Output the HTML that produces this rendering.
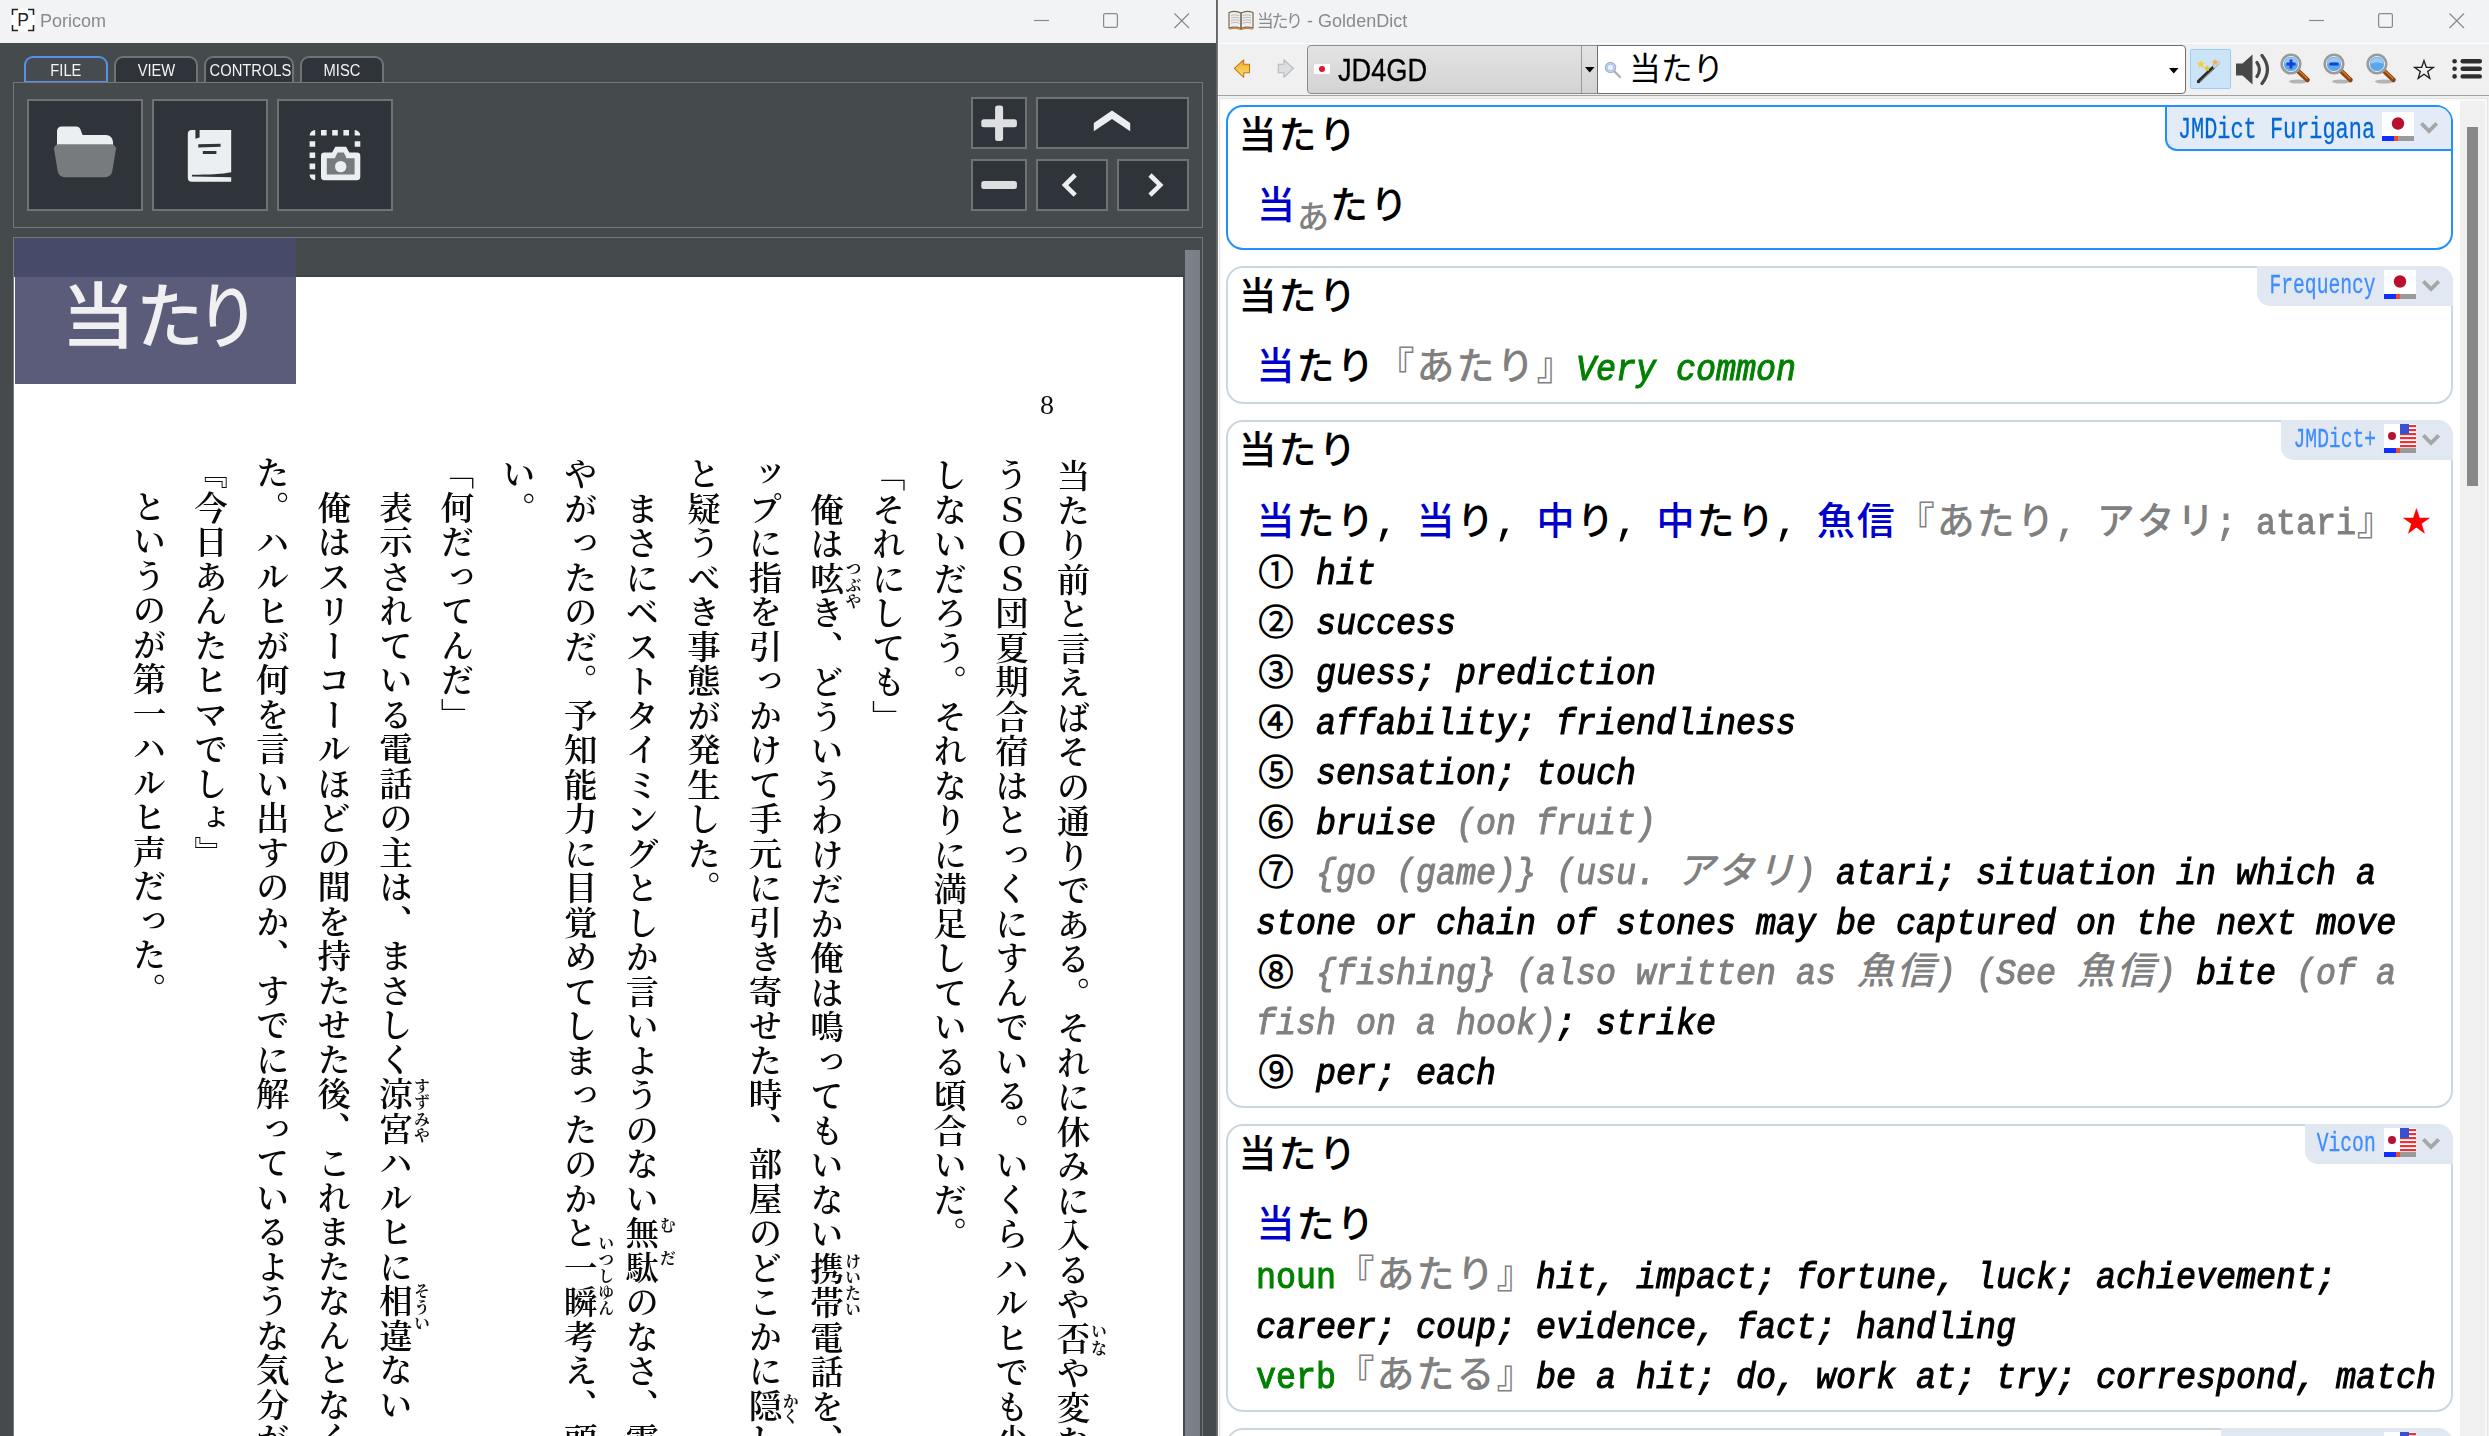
<!DOCTYPE html>
<html lang="ja">
<head>
<meta charset="utf-8">
<title>当たり - GoldenDict / Poricom</title>
<style>
*{margin:0;padding:0;box-sizing:border-box}
html,body{width:2489px;height:1436px;background:#fff}
body{font-family:"Liberation Sans","Noto Sans CJK JP",sans-serif}
#root{position:relative;width:2489px;height:1436px;overflow:hidden;background:#fff}
.a{position:absolute}
/* ---------- left window : Poricom ---------- */
#L{left:0;top:0;width:1216px;height:1436px;background:#454b4d;overflow:hidden}
.tb{left:0;top:0;height:43px;background:#f2f3f5}
.tt{top:9px;height:24px;line-height:24px;font-size:18px;color:#8a8a8a;white-space:nowrap;filter:grayscale(1)}
.tab{top:56px;height:27px;border:2px solid #6f7375;border-bottom:0;border-radius:9px 9px 0 0;background:#2f343a;color:#f4f4f4;font-size:16px;line-height:25px;text-align:center;white-space:nowrap}
.tab span{display:inline-block;transform:scaleX(.92)}
.tab.on{background:#454b4e;border:2px solid #5a8fe6;height:27px}
.pn{border:1px solid #75797b}
.bt{background:#2f343a;border:2px solid #6f7375}
.bt svg{position:absolute;left:0;top:0}
#pg{left:14px;top:277px;width:1169px;height:1159px;background:#fff;overflow:hidden}
#tx{left:0;top:0;width:1169px;height:1159px;filter:grayscale(1)}
.c{position:absolute;top:181.5px;width:40px;writing-mode:vertical-rl;font-family:"Liberation Serif","Noto Serif CJK SC",serif;font-size:33.5px;line-height:40px;letter-spacing:1px;color:#0a0a0a;white-space:nowrap;font-weight:600}
.r{position:absolute;width:20px;writing-mode:vertical-rl;font-family:"Liberation Serif","Noto Serif CJK SC",serif;font-size:16px;line-height:20px;color:#111;white-space:nowrap;font-weight:700}
.pop{color:#f0f0f2;font-size:72px;line-height:100px;font-weight:500;font-family:"Liberation Sans","Noto Sans CJK JP",sans-serif;white-space:nowrap}
.pop span{position:absolute;top:28.5px;display:block;transform-origin:0 0}
/* ---------- right window : GoldenDict ---------- */
#R{left:1218px;top:0;width:1271px;height:1436px;background:#fff;overflow:hidden}
.card{border:2px solid #cbd7df;border-radius:17px;background:#fff}
.card.on{border-color:#1e90ff}
.dn{height:40px;background:#e1e8f2;border-radius:0 15px 0 13px;font-family:"Liberation Mono",monospace;font-size:27.9px;color:#3f8cff;white-space:nowrap}
.dn.on{border:2px solid #1e90ff;border-top:0;border-right:0;border-radius:0 14px 0 12px;background:#e3ecf6;color:#0468d4;font-size:30px}
.dn i{position:absolute;display:block;font-style:normal;transform:scaleX(.705);transform-origin:100% 50%;-webkit-text-stroke:.3px currentColor}
.dn.on i{transform:scaleX(.73)}
.hw{font-family:"Liberation Sans","Noto Sans CJK JP",sans-serif;font-size:38px;letter-spacing:2px;font-weight:500;line-height:50px;height:50px;color:#000;white-space:nowrap}
.ln{font-family:"Liberation Sans","Noto Sans CJK JP",sans-serif;font-size:38px;font-weight:500;line-height:50px;height:50px;color:#000;white-space:pre}
.ln span{display:inline-block;vertical-align:baseline}
.ln .m{font-family:"Liberation Mono",monospace;font-size:36.75px;font-weight:400;transform:scaleX(.907);transform-origin:0 50%;-webkit-text-stroke:1.05px currentColor}
.ln .i{font-style:italic}
.ln .j{font-family:"Liberation Sans","Noto Sans CJK JP",sans-serif;letter-spacing:2px;position:relative;top:-.5px;left:1px}
.ln .cd{font-family:"Liberation Sans","Noto Sans CJK JP",sans-serif;font-size:35px;font-weight:300;width:40px;text-align:center;position:relative;left:.5px;top:.5px;-webkit-text-stroke:1.3px currentColor}
.k{color:#0000cd}
.g{color:#808080}
.n{color:#008000}
</style>
</head>
<body>
<div id="root">
<div id="L" class="a">
<div class="a tb" style="width:1216px"></div>
<svg class="a" style="left:11px;top:8px" width="24" height="24" viewBox="0 0 24 24"><rect x="0.5" y="0.5" width="23" height="23" fill="#fff"/><path d="M1.5 7V1.5H7M17 1.5h5.5V7M22.5 17v5.5H17M7 22.5H1.5V17" fill="none" stroke="#222" stroke-width="1.6"/><text x="12" y="18.2" font-family="Liberation Sans, sans-serif" font-size="17.5" text-anchor="middle" fill="#222">P</text></svg>
<div class="a tt" style="left:40px">Poricom</div>
<svg class="a" style="left:1034px;top:10px" width="160" height="22" viewBox="0 0 160 22"><path d="M0 10.5h15" stroke="#8a8a8a" stroke-width="1.2" fill="none"/><rect x="69.6" y="3.6" width="13.8" height="13.8" rx="1.6" fill="none" stroke="#8a8a8a" stroke-width="1.2"/><path d="M140.5 3.5l14.5 14.5M155 3.5l-14.5 14.5" stroke="#8a8a8a" stroke-width="1.2" fill="none"/></svg>
<div class="a tab on" style="left:24px;width:84px"><span>FILE</span></div>
<div class="a tab" style="left:114px;width:84px"><span>VIEW</span></div>
<div class="a tab" style="left:204px;width:90px"><span>CONTROLS</span></div>
<div class="a tab" style="left:300px;width:84px"><span>MISC</span></div>
<div class="a pn" style="left:13px;top:82px;width:1190px;height:146px"></div>
<div class="a bt" style="left:27px;top:99px;width:116px;height:112px"><svg width="112" height="108" viewBox="29 101 112 108"><path d="M57 131a4.5 4.5 0 0 1 4.5-4.5h14.5a5 5 0 0 1 4.6 3.2l1.6 4.6a1 1 0 0 0 1 .7h22.8a7 7 0 0 1 7 7v6H57z" fill="#eceff1"/><path d="M58.5 144.3h53a4.5 4.5 0 0 1 4.4 5.3l-3.6 21.6a7.2 7.2 0 0 1-7.1 6H64.8a7.2 7.2 0 0 1-7.1-6l-3.6-21.6a4.5 4.5 0 0 1 4.4-5.3z" fill="#787b7d"/></svg></div>
<div class="a bt" style="left:152px;top:99px;width:116px;height:112px"><svg width="112" height="108" viewBox="154 101 112 108"><path d="M187.800 134a4 4 0 0 1 4-4h3.600v8.800l4.200-1.200v-7.600h31.600v42.200c-8 1.800-24 2.400-39.200 2.600v1.800l39.200.600v4.600h-39.400a4 4 0 0 1-4-4z" fill="#eceff1"/><path d="M198.300 144.300l22.300-.6v3l-22.300.8zM202.800 151h13.600v3.100h-13.600z" fill="#2f343a"/></svg></div>
<div class="a bt" style="left:277px;top:99px;width:116px;height:112px"><svg width="112" height="108" viewBox="279 101 112 108"><path d="M309.6 135.6a5.6 5.6 0 0 1 5.6-5.6v5.6zM321 130h5.6v5.6H321zM332.2 130h5.6v5.6h-5.6zM343.4 130h5.6v5.6h-5.6zM354.7 130a5.6 5.6 0 0 1 5.6 5.6h-5.6zM354.7 141.2h5.6v5.6h-5.6zM309.6 141.2h5.6v5.6h-5.6zM309.6 152.4h5.6v5.6h-5.6zM309.6 163.6h5.6v5.6h-5.6zM309.6 174.6h5.6v5.6a5.6 5.6 0 0 1-5.6-5.6z" fill="#eceff1"/><path d="M335.3 146.8h10.8l3.2 5.6h7.6a3.4 3.4 0 0 1 3.4 3.4v21a3.4 3.4 0 0 1-3.4 3.4h-32.500a3.4 3.4 0 0 1-3.400-3.4v-21a3.4 3.4 0 0 1 3.400-3.4h7.700z" fill="#eceff1"/><path d="M326.800 158.2h8l2.800-5.600h6.200l2.800 5.600h8v16.200h-27.800z" fill="#787b7d"/><circle cx="340.7" cy="166.600" r="5.700" fill="#eceff1"/></svg></div>
<div class="a bt" style="left:971px;top:97px;width:56px;height:52px"><svg width="52" height="48" viewBox="973 99 52 48"><rect x="981.300" y="119.200" width="35.600" height="8" rx="2.500" fill="#dedfe1"/><rect x="995.100" y="105.400" width="8" height="35.600" rx="2.500" fill="#dedfe1"/></svg></div>
<div class="a bt" style="left:971px;top:159px;width:56px;height:52px"><svg width="52" height="48" viewBox="973 161 52 48"><rect x="981.300" y="181" width="35.600" height="8" rx="2.500" fill="#dedfe1"/></svg></div>
<div class="a bt" style="left:1036px;top:97px;width:153px;height:52px"><svg width="149" height="48" viewBox="1038 99 149 48"><path d="M1093.800 131.200v-8.200l18.200-12.400 18.200 12.400v8.200l-18.200-12.200z" fill="#eceff1"/></svg></div>
<div class="a bt" style="left:1036px;top:159px;width:72px;height:52px"><svg width="68" height="48" viewBox="1038 161 68 48"><path d="M1075.200 175l-10.200 10.100 10.200 10.100" stroke="#eceff1" stroke-width="4.600" fill="none"/></svg></div>
<div class="a bt" style="left:1117px;top:159px;width:72px;height:52px"><svg width="68" height="48" viewBox="1119 161 68 48"><path d="M1150 175l10.200 10.100-10.200 10.100" stroke="#eceff1" stroke-width="4.600" fill="none"/></svg></div>
<div class="a pn" style="left:13px;top:237px;width:1190px;height:1210px"></div>
<div class="a" style="left:14px;top:274px;width:1170px;height:3px;background:linear-gradient(#454b4d,#3a3f41)"></div>
<div id="pg" class="a" lang="ja"><div id="tx" class="a">
<div class="a" style="left:1021px;top:112.500px;width:24px;height:30px;font-family:'Liberation Serif',serif;font-size:28px;line-height:30px;text-align:center;color:#111">8</div>
<div class="c" style="left:1036.0px;top:181.5px">当たり前と言えばその通りである。それに休みに入るや否や変な</div>
<div class="c" style="left:974.4px;top:181.3px">うＳＯＳ団夏期合宿はとっくにすんでいる。いくらハルヒでも少</div>
<div class="c" style="left:912.8px;top:181.1px">しないだろう。それなりに満足している頃合いだ。</div>
<div class="c" style="left:851.2px;top:180.9px">「それにしても」</div>
<div class="c" style="left:789.6px;top:180.7px">　俺は呟き、どういうわけだか俺は鳴ってもいない携帯電話を、</div>
<div class="c" style="left:728.0px;top:180.4px">ップに指を引っかけて手元に引き寄せた時、部屋のどこかに隠し</div>
<div class="c" style="left:666.4px;top:180.2px">と疑うべき事態が発生した。</div>
<div class="c" style="left:604.8px;top:180.0px">　まさにベストタイミングとしか言いようのない無駄のなさ、電</div>
<div class="c" style="left:543.2px;top:179.8px">やがったのだ。予知能力に目覚めてしまったのかと一瞬考え、頭</div>
<div class="c" style="left:481.6px;top:179.6px">い。</div>
<div class="c" style="left:420.0px;top:179.4px">「何だってんだ」</div>
<div class="c" style="left:358.4px;top:179.2px">　表示されている電話の主は、まさしく涼宮ハルヒに相違ない</div>
<div class="c" style="left:296.8px;top:179.0px">　俺はスリーコールほどの間を持たせた後、これまたなんとなく</div>
<div class="c" style="left:235.2px;top:178.8px">た。ハルヒが何を言い出すのか、すでに解っているような気分が</div>
<div class="c" style="left:173.6px;top:178.6px">『今日あんたヒマでしょ』</div>
<div class="c" style="left:112.0px;top:178.3px">　というのが第一ハルヒ声だった。</div>
<div class="r" style="left:828.0px;top:283.0px;letter-spacing:0.5px">つぶや</div>
<div class="r" style="left:827.4px;top:975.5px;letter-spacing:0.0px">けいたい</div>
<div class="r" style="left:765.3px;top:1116.0px;letter-spacing:-1.5px">かく</div>
<div class="r" style="left:642.3px;top:940.0px;letter-spacing:0.0px">む</div>
<div class="r" style="left:642.3px;top:972.5px;letter-spacing:0.0px">だ</div>
<div class="r" style="left:580.8px;top:958.0px;letter-spacing:0.3px">いつしゆん</div>
<div class="r" style="left:396.6px;top:801.0px;letter-spacing:0.3px">すずみや</div>
<div class="r" style="left:396.6px;top:1006.0px;letter-spacing:0.2px">そうい</div>
<div class="r" style="left:1073.5px;top:1046.0px;letter-spacing:1.0px">いな</div>
</div></div>
<div class="a" style="left:1185px;top:250px;width:15px;height:1190px;background:linear-gradient(90deg,#7d848b,#797d85)"></div>
<div class="a" style="left:14px;top:238px;width:282px;height:39px;background:#474b69"></div>
<div class="a" style="left:15px;top:277px;width:281px;height:107px;background:#5b5c79"></div>
<div class="a pop" lang="ja" style="left:15px;top:238px;width:281px;height:146px"><span style="left:46.400px;transform:scaleX(1.035)">当</span><span style="left:121.200px;transform:scaleX(.938)">た</span><span style="left:182.200px;transform:scaleX(.858)">り</span></div>
</div>
<div class="a" style="left:1216px;top:0;width:2px;height:1436px;background:linear-gradient(90deg,#5a5a5a,#808080)"></div>
<div id="R" class="a" lang="ja">
<div class="a tb" style="width:1271px"></div>
<svg class="a" style="left:10px;top:9px" width="26" height="22" viewBox="0 0 26 22"><path d="M1 3.500c4-1.500 8-1.500 12 .5 4-2 8-2 12-.5v15.500c-4-1.200-8-1.200-12 .600-4-1.800-8-1.800-12-.600z" fill="#efefef" stroke="#7d6a4c" stroke-width="1.200"/><path d="M1 19.500c4-1.200 8-1.200 12 .600 4-1.800 8-1.800 12-.600v1.200c-4-1-8-1-12 .5-4-1.500-8-1.500-12-.5z" fill="#c98a3c"/><path d="M13 4v15.500" stroke="#6f6552" stroke-width="1.600"/><path d="M3 6.500c3-1 6-.8 8.500.3M3 9c3-1 6-.8 8.500.3M3 11.500c3-1 6-.8 8.500.3M3 14c3-1 6-.8 8.500.3M14.500 6.800c2.500-1.100 5.500-1.300 8.500-.3M14.500 9.300c2.500-1.100 5.500-1.300 8.500-.3M14.500 11.800c2.500-1.100 5.500-1.300 8.500-.3M14.500 14.300c2.500-1.100 5.500-1.300 8.500-.3" stroke="#b0b0b0" stroke-width=".9" fill="none"/></svg>
<div class="a tt" style="left:38.8px"><span style="font-size:17px;letter-spacing:-2.400px">当たり</span><span style="margin-left:1.500px"> - GoldenDict</span></div>
<svg class="a" style="left:1091px;top:10px" width="160" height="22" viewBox="0 0 160 22"><path d="M0 10.5h15" stroke="#8a8a8a" stroke-width="1.2" fill="none"/><rect x="69.6" y="3.6" width="13.8" height="13.8" rx="1.6" fill="none" stroke="#8a8a8a" stroke-width="1.2"/><path d="M140.5 3.5l14.5 14.5M155 3.5l-14.5 14.5" stroke="#8a8a8a" stroke-width="1.2" fill="none"/></svg>
<div class="a" style="left:0;top:96px;width:1px;height:1345px;background:#fafafa;z-index:1"></div>
<div class="a" style="left:0;top:44px;width:1px;height:51px;background:#fafafa;z-index:1"></div>
<div class="a" style="left:0;top:43px;width:1271px;height:53px;background:#f0f0f0;border-top:1px solid #fff;border-bottom:1px solid #a3a3a3"></div>
<div class="a" style="left:0;top:96px;width:1271px;height:1340px;background:#f0f0f0"></div>
<svg class="a" style="left:14.8px;top:59.300px" width="18" height="19" viewBox="-1 -.5 18 19"><defs><linearGradient id="ga" x1="0" y1="0" x2="0" y2="1"><stop offset="0" stop-color="#f2a63a"/><stop offset=".45" stop-color="#f6c244"/><stop offset="1" stop-color="#f8e478"/></linearGradient></defs><path d="M.3 8.900L9.700.3v4.400h5.800v8.500H9.700v4.600z" fill="url(#ga)" stroke="#c27c1c" stroke-width="1.100" stroke-linejoin="round"/></svg>
<svg class="a" style="left:58.8px;top:59.300px" width="18" height="19" viewBox="-1 -.5 18 19"><path d="M15.400 8.900L6 .3v4.400H.3v8.500H6v4.600z" fill="#dcdee0" stroke="#b4b8bc" stroke-width="1.100" stroke-linejoin="round"/></svg>
<div class="a" style="left:89px;top:45px;width:291px;height:49px;border:1px solid #8c8c8c;border-radius:4px 0 0 4px;background:linear-gradient(#e3e3e3,#dcdcdc 45%,#d3d3d3)"></div>
<div class="a" style="left:363px;top:46px;width:1px;height:47px;background:#9a9a9a"></div>
<svg class="a" style="left:367px;top:67px" width="10" height="6" viewBox="0 0 10 6"><path d="M0 0h9.500L4.750 5.500z" fill="#000"/></svg>
<svg class="a" style="left:96px;top:64px" width="16" height="10" viewBox="0 0 16 10"><rect width="16" height="10" fill="#fff"/><circle cx="8" cy="5" r="3" fill="#e8112d"/></svg>
<div class="a" style="left:120px;top:50px;height:40px;line-height:40px;font-size:32px;color:#000;white-space:nowrap;transform:scaleX(.85);transform-origin:0 0;-webkit-text-stroke:.35px #000">JD4GD</div>
<div class="a" style="left:379px;top:45px;width:589px;height:49px;border:1px solid #6e6e6e;border-radius:0 4px 4px 0;background:#fff"></div>
<svg class="a" style="left:386px;top:61px" width="18" height="18" viewBox="0 0 18 18"><circle cx="6.500" cy="6.500" r="5" fill="#dbe8f8" stroke="#a9b6cf" stroke-width="1.600"/><circle cx="6.500" cy="6.500" r="3.300" fill="#e9f1fb" stroke="#8fb4ee" stroke-width=".8"/><path d="M10.500 10.500l5.500 5.500" stroke="#b0b0b0" stroke-width="2.400" stroke-linecap="round"/></svg>
<div class="a" style="left:411.3px;top:44.700px;height:49px;line-height:49px;font-size:31.600px;color:#000;white-space:nowrap;font-family:'Liberation Sans','Noto Sans CJK JP',sans-serif">当たり</div>
<svg class="a" style="left:951px;top:68px" width="10" height="6" viewBox="0 0 10 6"><path d="M0 0h9.500L4.750 5.500z" fill="#000"/></svg>
<div class="a" style="left:972px;top:49px;width:41px;height:40px;background:#cce4f7;border:1px solid #9acdf8;border-radius:2px"></div>
<svg class="a" style="left:977px;top:54px" width="32" height="32" viewBox="0 0 32 32"><path d="M3.500 27.500L23 9" stroke="#2b2b2b" stroke-width="3.400" stroke-linecap="round"/><path d="M5 27.500L21 12.500" stroke="#8a8a8a" stroke-width="1" stroke-linecap="round"/><path d="M19.500 12.300l4.300-4.100" stroke="#c9d2e2" stroke-width="3.400" stroke-linecap="round"/><path d="M6 6l1.200 2.600 2.800.4-2 2 .5 2.800L6 12.500 3.500 13.800l.5-2.800-2-2 2.800-.4z" fill="#f4d03f"/><path d="M12 11l1 2 2.200.300-1.600 1.600.4 2.200-2-1-2 1 .4-2.200-1.600-1.600 2.200-.300z" fill="#f1c40f"/><path d="M20 5l1 2 2.200.300-1.600 1.600.4 2.200-2-1-2 1 .4-2.200-1.600-1.600 2.200-.300z" fill="#f5b041"/></svg>
<svg class="a" style="left:1018px;top:53px" width="36" height="33" viewBox="0 0 36 33"><path d="M0 10.500h6.500L16.500 1.500v30L6.500 22.500H0z" fill="#484848"/><path d="M21 9.500c3.200 4.600 3.200 9.400 0 14M26 2.500c7 9 7 19 0 28" stroke="#484848" stroke-width="3.200" fill="none" stroke-linecap="round"/></svg>
<svg class="a" style="left:1062px;top:53px" width="32" height="32" viewBox="0 0 32 32"><ellipse cx="18" cy="28.500" rx="9" ry="2" fill="#000" opacity=".25"/><path d="M17 17l10.500 10" stroke="#8b4513" stroke-width="4.600" stroke-linecap="round"/><path d="M17.500 16.500l9.500 9" stroke="#d2762c" stroke-width="1.600" stroke-linecap="round"/><circle cx="11" cy="11" r="9.300" fill="#5aa7ea" stroke="#9a9a9a" stroke-width="2.600"/><circle cx="11" cy="11" r="7.600" fill="none" stroke="#e8e8e8" stroke-width="1"/><path d="M4.500 11a6.500 6.500 0 0 1 13 0c-4-2-9-2-13 0z" fill="#a9d4f7" opacity=".8"/><path d="M6.500 11h9M11 6.500v9" stroke="#1240d8" stroke-width="3"/></svg>
<svg class="a" style="left:1105px;top:53px" width="32" height="32" viewBox="0 0 32 32"><ellipse cx="18" cy="28.500" rx="9" ry="2" fill="#000" opacity=".25"/><path d="M17 17l10.500 10" stroke="#8b4513" stroke-width="4.600" stroke-linecap="round"/><path d="M17.500 16.500l9.500 9" stroke="#d2762c" stroke-width="1.600" stroke-linecap="round"/><circle cx="11" cy="11" r="9.300" fill="#5aa7ea" stroke="#9a9a9a" stroke-width="2.600"/><circle cx="11" cy="11" r="7.600" fill="none" stroke="#e8e8e8" stroke-width="1"/><path d="M4.500 11a6.500 6.500 0 0 1 13 0c-4-2-9-2-13 0z" fill="#a9d4f7" opacity=".8"/><path d="M6.500 11h9" stroke="#1240d8" stroke-width="3"/></svg>
<svg class="a" style="left:1148px;top:53px" width="32" height="32" viewBox="0 0 32 32"><ellipse cx="18" cy="28.500" rx="9" ry="2" fill="#000" opacity=".25"/><path d="M17 17l10.500 10" stroke="#8b4513" stroke-width="4.600" stroke-linecap="round"/><path d="M17.500 16.500l9.500 9" stroke="#d2762c" stroke-width="1.600" stroke-linecap="round"/><circle cx="11" cy="11" r="9.300" fill="#5aa7ea" stroke="#9a9a9a" stroke-width="2.600"/><circle cx="11" cy="11" r="7.600" fill="none" stroke="#e8e8e8" stroke-width="1"/><path d="M4.500 11a6.500 6.500 0 0 1 13 0c-4-2-9-2-13 0z" fill="#a9d4f7" opacity=".8"/></svg>
<svg class="a" style="left:1195px;top:59px" width="22" height="21" viewBox="0 0 22 21"><path d="M11 1.600l2.300 6.700h7.100l-5.700 4.200 2.100 6.800-5.800-4.100-5.800 4.100 2.100-6.800-5.700-4.200h7.100z" fill="none" stroke="#1a1a1a" stroke-width="1.300" stroke-linejoin="miter"/></svg>
<svg class="a" style="left:1234px;top:58px" width="31" height="22" viewBox="0 0 31 22"><g fill="#2e2e2e"><circle cx="2.600" cy="3.200" r="2.300"/><circle cx="2.600" cy="10.800" r="2.300"/><circle cx="2.600" cy="18.400" r="2.300"/><rect x="8.500" y="1" width="21.500" height="4.400" rx="2.200"/><rect x="8.500" y="8.600" width="21.500" height="4.400" rx="2.200"/><rect x="8.500" y="16.200" width="21.500" height="4.400" rx="2.200"/></g></svg>
<div class="a" style="left:1px;top:98px;width:1269px;height:1345px;border:1px solid #e4e4e4;background:#fafafa"></div>
<div class="a" style="left:4px;top:101px;width:1238px;height:1340px;background:#fff"></div>
<div class="a" style="left:1242px;top:101px;width:25px;height:1340px;background:#f0f0f0"></div>
<div class="a" style="left:1249px;top:127px;width:11px;height:359px;background:#888"></div>
<div class="a card on" style="left:8px;top:105px;width:1227px;height:145px"></div>
<div class="a dn on" style="left:947px;top:107px;width:286px;height:44px"><i style="right:76.2px;top:3px;line-height:41px">JMDict Furigana</i></div>
<svg class="a" style="left:1164px;top:112px" width="32" height="29" viewBox="0 0 32 29"><rect width="32" height="24" fill="#fff"/><circle cx="16" cy="11.500" r="6.200" fill="#b8102f"/><rect y="24" width="12" height="5" fill="#0f2fff"/><rect x="12" y="24" width="4" height="5" fill="#f04a28"/><rect x="16" y="24" width="16" height="5" fill="#9a9a9a"/></svg>
<svg class="a" style="left:1202.0px;top:122.0px" width="20" height="14" viewBox="0 0 20 14"><path d="M1.340 1.340l7.700 7.800 7.700-7.800" stroke="#a6a6a6" stroke-width="3.800" fill="none"/></svg>
<div class="a hw" style="left:20.5px;top:109.5px">当たり</div>
<div class="a ln" style="left:38.0px;top:180.600px"><span class="j k">当</span><span class="j g" style="font-size:32px;letter-spacing:1px;top:9px">あ</span><span class="j">たり</span></div>
<div class="a card" style="left:8px;top:266px;width:1227px;height:138px"></div>
<div class="a dn" style="left:1039px;top:266px;width:196px;height:40px"><i style="right:77.0px;top:1px;line-height:38px">Frequency</i></div>
<svg class="a" style="left:1166px;top:270px" width="32" height="29" viewBox="0 0 32 29"><rect width="32" height="24" fill="#fff"/><circle cx="16" cy="11.500" r="6.200" fill="#b8102f"/><rect y="24" width="12" height="5" fill="#0f2fff"/><rect x="12" y="24" width="4" height="5" fill="#f04a28"/><rect x="16" y="24" width="16" height="5" fill="#9a9a9a"/></svg>
<svg class="a" style="left:1203.8px;top:279.8px" width="20" height="14" viewBox="0 0 20 14"><path d="M1.340 1.340l7.700 7.800 7.700-7.800" stroke="#a6a6a6" stroke-width="3.800" fill="none"/></svg>
<div class="a hw" style="left:20.5px;top:270.5px">当たり</div>
<div class="a ln" style="left:37.5px;top:341.8px"><span class="j k">当</span><span class="j">たり</span><span class="j g">『あたり』</span><span class="m n i" style="width:220px">Very common</span></div>
<div class="a card" style="left:8px;top:420px;width:1227px;height:688px"></div>
<div class="a dn" style="left:1063px;top:420px;width:172px;height:40px"><i style="right:77.0px;top:1px;line-height:38px">JMDict+</i></div>
<svg class="a" style="left:1166px;top:424px" width="32" height="29" viewBox="0 0 32 29"><rect width="16" height="24" fill="#fff"/><circle cx="8" cy="12" r="4" fill="#b8102f"/><rect x="16" width="16" height="24" fill="#fff"/><rect x="16" y="1" width="16" height="2.200" fill="#e8323c"/><rect x="16" y="5" width="16" height="2.200" fill="#e8323c"/><rect x="16" y="9" width="16" height="2.200" fill="#e8323c"/><rect x="16" y="13" width="16" height="2.200" fill="#e8323c"/><rect x="16" y="17" width="16" height="2.200" fill="#e8323c"/><rect x="16" y="21" width="16" height="2.200" fill="#e8323c"/><rect x="16" y="0" width="9" height="10" fill="#3a4fd0"/><rect y="24" width="12" height="5" fill="#0f2fff"/><rect x="12" y="24" width="4" height="5" fill="#f04a28"/><rect x="16" y="24" width="16" height="5" fill="#9a9a9a"/></svg>
<svg class="a" style="left:1203.8px;top:433.8px" width="20" height="14" viewBox="0 0 20 14"><path d="M1.340 1.340l7.700 7.800 7.700-7.800" stroke="#a6a6a6" stroke-width="3.800" fill="none"/></svg>
<div class="a hw" style="left:20.5px;top:425.0px">当たり</div>
<div class="a ln" style="left:37.5px;top:496.1px"><span class="j k">当</span><span class="j">たり</span><span class="m" style="width:40px">, </span><span class="j k">当</span><span class="j">り</span><span class="m" style="width:40px">, </span><span class="j k">中</span><span class="j">り</span><span class="m" style="width:40px">, </span><span class="j k">中</span><span class="j">たり</span><span class="m" style="width:40px">, </span><span class="j k">魚信</span><span class="j g">『あたり</span><span class="m g" style="width:40px">, </span><span class="j g">アタリ</span><span class="m g" style="width:140px">; atari</span><span class="j g">』</span></div>
<div class="a" style="left:1184px;top:501.500px;font-size:29px;line-height:40px;color:#ff0000;font-family:'Liberation Sans','Noto Sans CJK JP',sans-serif">★</div>
<div class="a ln" style="left:37.5px;top:546.1px"><span class="cd">①</span><span class="m i" style="width:80px"> hit</span></div>
<div class="a ln" style="left:37.5px;top:596.1px"><span class="cd">②</span><span class="m i" style="width:160px"> success</span></div>
<div class="a ln" style="left:37.5px;top:646.1px"><span class="cd">③</span><span class="m i" style="width:360px"> guess; prediction</span></div>
<div class="a ln" style="left:37.5px;top:696.1px"><span class="cd">④</span><span class="m i" style="width:500px"> affability; friendliness</span></div>
<div class="a ln" style="left:37.5px;top:746.1px"><span class="cd">⑤</span><span class="m i" style="width:340px"> sensation; touch</span></div>
<div class="a ln" style="left:37.5px;top:796.1px"><span class="cd">⑥</span><span class="m i" style="width:160px"> bruise </span><span class="m g i" style="width:200px">(on fruit)</span></div>
<div class="a ln" style="left:37.5px;top:846.1px"><span class="cd">⑦</span><span class="m g i" style="width:380px"> {go (game)} (usu. </span><span class="j g i">アタリ</span><span class="m g i" style="width:40px">) </span><span class="m i" style="width:540px">atari; situation in which a</span></div>
<div class="a ln" style="left:37.5px;top:896.1px"><span class="m i" style="width:1140px">stone or chain of stones may be captured on the next move</span></div>
<div class="a ln" style="left:37.5px;top:946.1px"><span class="cd">⑧</span><span class="m g i" style="width:560px"> {fishing} (also written as </span><span class="j g i">魚信</span><span class="m g i" style="width:140px">) (See </span><span class="j g i">魚信</span><span class="m g i" style="width:40px">) </span><span class="m i" style="width:100px">bite </span><span class="m g i" style="width:100px">(of a</span></div>
<div class="a ln" style="left:37.5px;top:996.1px"><span class="m g i" style="width:300px">fish on a hook)</span><span class="m i" style="width:160px">; strike</span></div>
<div class="a ln" style="left:37.5px;top:1046.1px"><span class="cd">⑨</span><span class="m i" style="width:200px"> per; each</span></div>
<div class="a card" style="left:8px;top:1124px;width:1227px;height:288px"></div>
<div class="a dn" style="left:1087px;top:1124px;width:148px;height:40px"><i style="right:77.0px;top:1px;line-height:38px">Vicon</i></div>
<svg class="a" style="left:1166px;top:1128px" width="32" height="29" viewBox="0 0 32 29"><rect width="16" height="24" fill="#fff"/><circle cx="8" cy="12" r="4" fill="#b8102f"/><rect x="16" width="16" height="24" fill="#fff"/><rect x="16" y="1" width="16" height="2.200" fill="#e8323c"/><rect x="16" y="5" width="16" height="2.200" fill="#e8323c"/><rect x="16" y="9" width="16" height="2.200" fill="#e8323c"/><rect x="16" y="13" width="16" height="2.200" fill="#e8323c"/><rect x="16" y="17" width="16" height="2.200" fill="#e8323c"/><rect x="16" y="21" width="16" height="2.200" fill="#e8323c"/><rect x="16" y="0" width="9" height="10" fill="#3a4fd0"/><rect y="24" width="12" height="5" fill="#0f2fff"/><rect x="12" y="24" width="4" height="5" fill="#f04a28"/><rect x="16" y="24" width="16" height="5" fill="#9a9a9a"/></svg>
<svg class="a" style="left:1203.8px;top:1137.8px" width="20" height="14" viewBox="0 0 20 14"><path d="M1.340 1.340l7.700 7.800 7.700-7.800" stroke="#a6a6a6" stroke-width="3.800" fill="none"/></svg>
<div class="a hw" style="left:20.5px;top:1129.0px">当たり</div>
<div class="a ln" style="left:37.5px;top:1199.8px"><span class="j k">当</span><span class="j">たり</span></div>
<div class="a ln" style="left:37.5px;top:1249.8px"><span class="m n" style="width:80px">noun</span><span class="j g">『あたり』</span><span class="m i" style="width:800px">hit, impact; fortune, luck; achievement;</span></div>
<div class="a ln" style="left:37.5px;top:1299.8px"><span class="m i" style="width:760px">career; coup; evidence, fact; handling</span></div>
<div class="a ln" style="left:37.5px;top:1349.8px"><span class="m n" style="width:80px">verb</span><span class="j g">『あたる』</span><span class="m i" style="width:900px">be a hit; do, work at; try; correspond, match</span></div>
<div class="a card" style="left:8px;top:1428px;width:1227px;height:60px"></div>
<div class="a dn" style="left:1003px;top:1428px;width:232px;height:40px"><i style="right:77.0px;top:4px;line-height:38px">JMnedict+</i></div>
<svg class="a" style="left:1166px;top:1432px" width="32" height="29" viewBox="0 0 32 29"><rect width="16" height="24" fill="#fff"/><circle cx="8" cy="12" r="4" fill="#b8102f"/><rect x="16" width="16" height="24" fill="#fff"/><rect x="16" y="1" width="16" height="2.200" fill="#e8323c"/><rect x="16" y="5" width="16" height="2.200" fill="#e8323c"/><rect x="16" y="9" width="16" height="2.200" fill="#e8323c"/><rect x="16" y="13" width="16" height="2.200" fill="#e8323c"/><rect x="16" y="17" width="16" height="2.200" fill="#e8323c"/><rect x="16" y="21" width="16" height="2.200" fill="#e8323c"/><rect x="16" y="0" width="9" height="10" fill="#3a4fd0"/><rect y="24" width="12" height="5" fill="#0f2fff"/><rect x="12" y="24" width="4" height="5" fill="#f04a28"/><rect x="16" y="24" width="16" height="5" fill="#9a9a9a"/></svg>
<svg class="a" style="left:1203.8px;top:1441.8px" width="20" height="14" viewBox="0 0 20 14"><path d="M1.340 1.340l7.700 7.800 7.700-7.800" stroke="#a6a6a6" stroke-width="3.800" fill="none"/></svg>
</div>
</div>
</body>
</html>
